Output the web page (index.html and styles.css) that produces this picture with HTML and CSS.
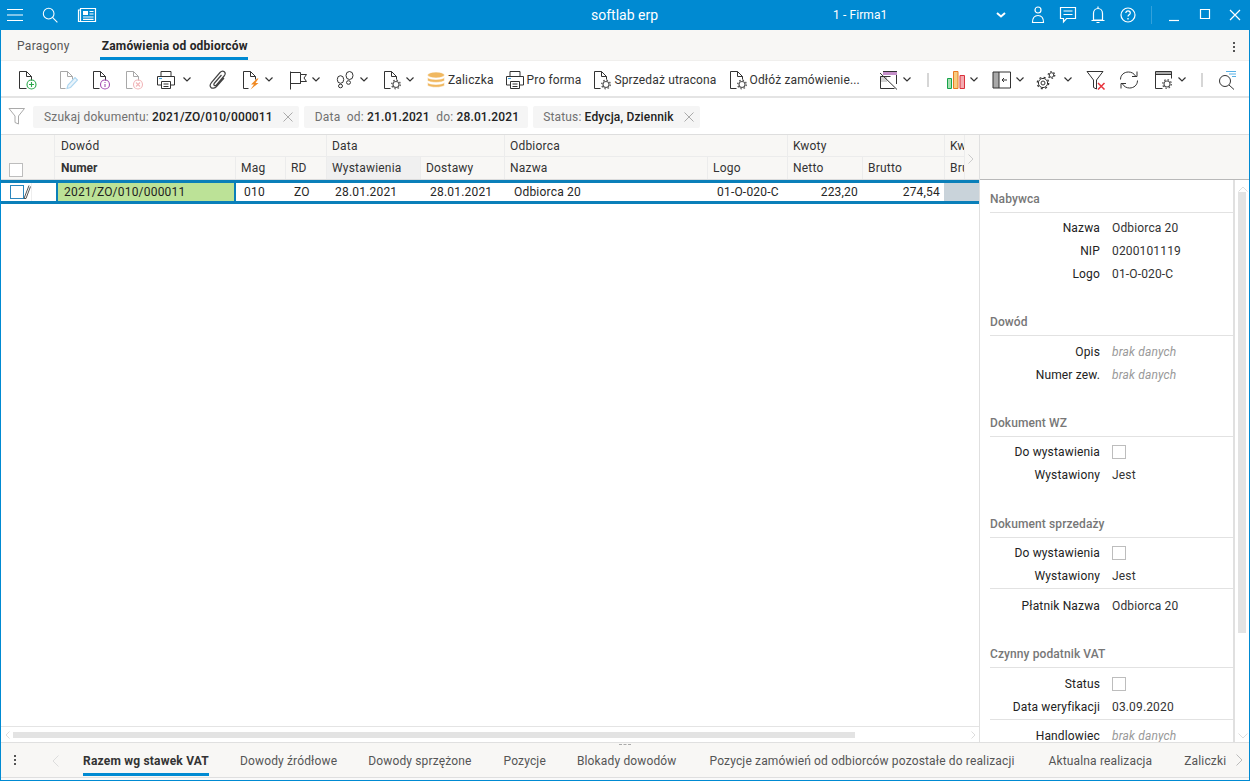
FILE: index.html
```html
<!DOCTYPE html>
<html lang="pl">
<head>
<meta charset="utf-8">
<title>softlab erp</title>
<link rel="stylesheet" href="styles.css">
</head>
<body>
<div class="window">
  <header class="titlebar">
    <div class="tb-left">
      <svg class="i22" viewBox="0 0 18 14"><path class="w" d="M0 1.500h16M0 7h16M0 12.500h16"/></svg>
      <svg class="i18 tb-search" viewBox="0 0 18 18"><circle class="w" cx="7.500" cy="7.500" r="6"/><path class="w" d="M11.800 11.800l5.500 5.500"/></svg>
      <svg class="i20 tb-news" viewBox="0 0 20 16"><path class="w" d="M3.500 1.500h15v13h-15zM3.500 3H1.500v11.500h2"/><path class="wf" d="M6 4h5v4H6z"/><path class="w" d="M12.500 4.500h4M12.500 7h4M6 10h10.500M6 12.300h10.500"/></svg>
    </div>
    <div class="tb-title">softlab erp</div>
    <div class="tb-firma">1 - Firma1</div>
    <svg class="tb-drop" viewBox="0 0 10 6"><path d="M1 1l4 3.500 4-3.500"/></svg>
    <svg class="i20 tb-user" viewBox="0 0 20 20"><circle class="w" cx="10" cy="5" r="3"/><path class="w" d="M4.500 17.500c0-5 2-7 5.500-7s5.500 2 5.500 7z"/></svg>
    <svg class="i20 tb-chat" viewBox="0 0 20 20"><path class="w" d="M2.500 2.500h15v11h-9l-3 3.500v-3.500h-3z"/><path class="w" d="M5.500 6h9M5.500 9.500h9"/></svg>
    <svg class="i20 tb-bell" viewBox="0 0 20 20"><path class="w" d="M5.500 15V8.500c0-3 2-5 4.500-5s4.500 2 4.500 5V15zM3.500 15.500h13M8.500 17.500h3M10 1.500v2"/></svg>
    <svg class="i20 tb-help" viewBox="0 0 20 20"><circle class="w" cx="10" cy="10" r="7"/><path class="w" d="M7.800 8c0-1.500 1-2.200 2.200-2.200s2.300.8 2.300 2.100c0 1.800-2.300 1.800-2.300 3.600"/><path class="wf" d="M9.300 13h1.400v1.400H9.300z"/></svg>
    <div class="tb-sep"></div>
    <svg class="i20 tb-min" viewBox="0 0 20 20"><path class="w" d="M5 15.500h10"/></svg>
    <svg class="i20 tb-max" viewBox="0 0 20 20"><path class="w" d="M5.500 5.500h9v9h-9z"/></svg>
    <svg class="i20 tb-close" viewBox="0 0 20 20"><path class="w" d="M5 5l10 10M15 5L5 15"/></svg>
  </header>

  <nav class="tabs">
    <span class="tab">Paragony</span>
    <span class="tab active">Zamówienia od odbiorców</span>
    <span class="kebab"><i></i><i></i><i></i></span>
  </nav>

  <div class="toolbar">
    <svg class="ic" viewBox="0 0 20 20"><path class="k" d="M1.500 18.500v-17h7l5 5v4M8.500 1.500v5h5M1.500 18.500h7"/><circle class="grn" cx="13.500" cy="14.500" r="4.500"/><path class="grn" d="M13.500 12v5M11 14.500h5"/></svg>
    <svg class="ic m20 faded" viewBox="0 0 20 20"><path class="k" d="M2.500 18.500v-17h7l5 5v3M9.500 1.500v5h5M2.500 18.500h5"/><path class="blu" d="M9 18.500l1-3.500 7-7.500 2.500 2.500-7 7.500z"/></svg>
    <svg class="ic m13" viewBox="0 0 20 20"><path class="k" d="M2.500 18.500v-17h7l5 5v4M9.500 1.500v5h5M2.500 18.500h6"/><circle class="pur" cx="14" cy="14.500" r="4.500"/><path class="pur" d="M14 14v3M14 12v1"/></svg>
    <svg class="ic m13 faded" viewBox="0 0 20 20"><path class="k" d="M2.500 18.500v-17h7l5 5v4M9.500 1.500v5h5M2.500 18.500h6"/><circle class="red" cx="14" cy="14.500" r="4.500"/><path class="red" d="M12 12.500l4 4M16 12.500l-4 4"/></svg>
    <svg class="ic m12" viewBox="0 0 20 20"><path class="k" d="M5 6V1.500h10V6M1.500 15V6.500h17V15H15M5 15H1.500"/><path class="k" d="M5.500 11.500h9v7h-9zM7.500 14h5M7.500 16.500h5"/><path class="blu" d="M3 8.500h3"/></svg>
    <svg class="chev g7" viewBox="0 0 8 5"><path d="M.5.500L4 4 7.500.500"/></svg>
    <svg class="ic m17" viewBox="0 0 20 20"><path class="k2" d="M16 8l-7.500 8.500c-1.700 1.900-4.300 2.100-5.500 1-1.200-1.200-1-3.300.6-5.200L12 2.500c1.300-1.400 3.200-1.700 4.300-.7 1.100 1 1 2.800-.2 4.200L8.500 14.800c-.8.900-1.700 1-2.300.5-.5-.6-.4-1.500.3-2.300L13.500 5"/></svg>
    <svg class="ic m13" viewBox="0 0 20 20"><path class="k" d="M2.500 18.500v-17h7l5 5v3M9.500 1.500v5h5M2.500 18.500h5"/><path class="ofill" d="M16 8.500l-6 6h3L9.500 19.500l8-6.500h-3l3-4.500z"/></svg>
    <svg class="chev" viewBox="0 0 8 5"><path d="M.5.500L4 4 7.500.500"/></svg>
    <svg class="ic m15" viewBox="0 0 20 20"><path class="k" d="M2.500 19.500V1.500M2.500 2.500h10v2h6l-2.500 3.500 2.500 3.500h-6v2h-10M12.500 4.500v9"/></svg>
    <svg class="chev" viewBox="0 0 8 5"><path d="M.5.500L4 4 7.500.500"/></svg>
    <svg class="ic m16" viewBox="0 0 20 20"><ellipse class="k" cx="4.500" cy="9.500" rx="3.200" ry="3.800"/><ellipse class="k" cx="4.500" cy="16" rx="2" ry="1.800"/><ellipse class="k" cx="13.500" cy="5.500" rx="3.500" ry="4"/><ellipse class="k" cx="12.500" cy="12.500" rx="2" ry="1.800"/></svg>
    <svg class="chev" viewBox="0 0 8 5"><path d="M.5.500L4 4 7.500.500"/></svg>
    <svg class="ic m14" viewBox="0 0 20 20"><path class="k" d="M2.500 18.500v-17h7l5 5v3M9.500 1.500v5h5M2.500 18.500h6"/><circle class="gr" cx="14" cy="14.500" r="3"/><circle class="teeth" cx="14" cy="14.500" r="4.300"/></svg>
    <svg class="chev" viewBox="0 0 8 5"><path d="M.5.500L4 4 7.500.500"/></svg>
    <span class="tool m12"><svg class="ic" viewBox="0 0 20 20"><ellipse class="coin" cx="10" cy="5" rx="8.500" ry="3"/><path class="coin" d="M1.500 7.500c2 2.500 15 2.500 17 0v3c-2 2.500-15 2.500-17 0zM1.500 12.500c2 2.500 15 2.500 17 0v2.800c-2 2.700-15 2.700-17 0z"/></svg><span>Zaliczka</span></span>
    <span class="tool m11"><svg class="ic" viewBox="0 0 20 20"><path class="k" d="M5 6V1.500h10V6M1.500 15V6.500h17V15H15M5 15H1.500"/><path class="k" d="M5.500 11.500h9v7h-9zM7.500 14h5M7.500 16.500h5"/><path class="blu" d="M3 8.500h3"/></svg><span>Pro forma</span></span>
    <span class="tool m11"><svg class="ic" viewBox="0 0 20 20"><path class="k" d="M2.500 18.500v-17h7l5 5v3M9.500 1.500v5h5M2.500 18.500h6"/><circle class="gr" cx="14" cy="14.500" r="3"/><circle class="teeth" cx="14" cy="14.500" r="4.300"/></svg><span>Sprzedaż utracona</span></span>
    <span class="tool m11"><svg class="ic" viewBox="0 0 20 20"><path class="k" d="M2.500 18.500v-17h7l5 5v3M9.500 1.500v5h5M2.500 18.500h6"/><circle class="gr" cx="14" cy="14.500" r="3"/><circle class="teeth" cx="14" cy="14.500" r="4.300"/></svg><span>Odłóż zamówienie...</span></span>
    <svg class="ic m19" viewBox="0 0 20 20"><path class="fp" d="M4 1h14v4H4z"/><path class="gfill2" d="M1 6h7v6H1z"/><path class="k" d="M1.500 6.500v12h14M17.500 5v9M4 1.500h14M1.500 6.500h10M1 3l17 16.500"/></svg>
    <svg class="chev" viewBox="0 0 8 5"><path d="M.5.500L4 4 7.500.500"/></svg>
    <div class="vsep"></div>
    <svg class="ic m17" viewBox="0 0 20 20"><path class="bar1" d="M1.500 8.500h4v10h-4z"/><path class="bar2" d="M7.500 1.500h4.500v17H7.500z"/><path class="bar3" d="M14 5.500h4.500v13H14z"/></svg>
    <svg class="chev" viewBox="0 0 8 5"><path d="M.5.500L4 4 7.500.500"/></svg>
    <svg class="ic m14" viewBox="0 0 20 20"><path class="gfill" d="M1 2h6v16H1z"/><path class="k" d="M1 2h17.500v16H1zM7 2v16M15 10H10M12 8l-2 2 2 2"/></svg>
    <svg class="chev" viewBox="0 0 8 5"><path d="M.5.500L4 4 7.500.500"/></svg>
    <svg class="ic m12" viewBox="0 0 20 20"><circle class="k" cx="7" cy="13" r="2"/><circle class="k" cx="7" cy="13" r="4.600"/><circle class="teeth-l" cx="7" cy="13" r="5.700"/><circle class="k" cx="15.500" cy="5" r="2.300"/><circle class="teeth-s" cx="15.500" cy="5" r="3.300"/></svg>
    <svg class="chev g8" viewBox="0 0 8 5"><path d="M.5.500L4 4 7.500.500"/></svg>
    <svg class="ic m14" viewBox="0 0 20 20"><path class="k" d="M1 1.500h16l-6.500 8.500v9l-3-1.500V10z"/><path class="rx" d="M12 13l6.500 6.500M18.500 13L12 19.500"/></svg>
    <svg class="ic m13" viewBox="0 0 20 20"><path class="k" d="M1.500 9.500c0-4.500 3.500-7.500 8-7.500 3 0 5.500 1.500 7 4M18 1.500V6.500h-5M18.500 10.500c0 4.500-3.500 7.500-8 7.500-3 0-5.500-1.500-7-4M2 18.500V13.500h5"/></svg>
    <svg class="ic m15" viewBox="0 0 20 20"><path class="gfill" d="M1.500 1.500h16v3h-16z"/><path class="k" d="M1.500 1.500h16v7M1.500 1.500v17h7M1.500 4.500h16"/><circle class="gr" cx="13" cy="14" r="3"/><circle class="teeth" cx="13" cy="14" r="4.300"/></svg>
    <svg class="chev" viewBox="0 0 8 5"><path d="M.5.500L4 4 7.500.500"/></svg>
    <div class="vsep sep2"></div>
    <svg class="ic m14" viewBox="0 0 20 20"><circle class="k" cx="8" cy="11" r="5.500"/><path class="k" d="M12 15l5 4.500"/><path class="bl" d="M9 1.500h10M12 4h7M15 6.500h4"/></svg>
  </div>

  <div class="filters">
    <svg class="funnel" viewBox="0 0 18 18"><path d="M1 1.500h15.500l-6 7.500v8l-3.500-1.500V9z"/></svg>
    <span class="chip"><span class="ct"><span class="cl">Szukaj dokumentu: </span><b>2021/ZO/010/000011</b></span><svg class="x" viewBox="0 0 10 10"><path d="M.5.500l9 9M9.500.500l-9 9"/></svg></span>
    <span class="chip c2"><span class="ct"><span class="cl">Data  od: </span><b>21.01.2021</b><span class="cl">  do: </span><b>28.01.2021</b></span></span>
    <span class="chip c3"><span class="ct"><span class="cl">Status: </span><b>Edycja, Dziennik</b></span><svg class="x" viewBox="0 0 10 10"><path d="M.5.500l9 9M9.500.500l-9 9"/></svg></span>
  </div>

  <main class="content">
    <section class="gridwrap">
      <div class="ghead">
        <div class="gh-corner"><span class="cb"></span></div>
        <div class="gh-g g-dowod">Dowód</div>
        <div class="gh-g g-data">Data</div>
        <div class="gh-g g-odb">Odbiorca</div>
        <div class="gh-g g-kwoty">Kwoty</div>
        <div class="gh-g g-kw">Kw</div>
        <div class="gh-c strong">Numer</div>
        <div class="gh-c">Mag</div>
        <div class="gh-c">RD</div>
        <div class="gh-c sorted">Wystawienia</div>
        <div class="gh-c">Dostawy</div>
        <div class="gh-c">Nazwa</div>
        <div class="gh-c">Logo</div>
        <div class="gh-c">Netto</div>
        <div class="gh-c">Brutto</div>
        <div class="gh-c">Bru</div>
        <div class="hmask"><svg viewBox="0 0 6 10"><path d="M.5.500L5 5 .5 9.500"/></svg></div>
      </div>
      <div class="grow">
        <div class="c c0"><span class="rowcb"></span><svg class="pen" viewBox="0 0 8 14"><path d="M1 13.500L6 .500M3 13.500L7.500 1.500M1 13.500h2"/></svg><span class="cellsep"></span></div>
        <div class="c c-num">2021/ZO/010/000011</div>
        <div class="c c-mag">010</div>
        <div class="c c-rd">ZO</div>
        <div class="c c-d1">28.01.2021</div>
        <div class="c c-d2">28.01.2021</div>
        <div class="c c-naz">Odbiorca 20</div>
        <div class="c c-logo">01-O-020-C</div>
        <div class="c c-r c-net">223,20</div>
        <div class="c c-r c-bru">274,54</div>
        <div class="c c-gray"></div>
      </div>
      <div class="gspace"></div>
      <div class="hscroll">
        <svg class="arr" viewBox="0 0 5 8"><path d="M4.500.500L1 4l3.500 3.500"/></svg>
        <div class="hthumb"></div>
        <svg class="arr arr-r" viewBox="0 0 5 8"><path d="M.5.500L4 4 .5 7.500"/></svg>
      </div>
    </section>

    <aside class="side">
      <div class="side-head"></div>
      <div class="side-body">
        <div class="side-scroll">
          <h3 class="st st-first">Nabywca</h3>
          <div class="rows">
            <div class="rw"><span class="l">Nazwa</span><span class="v">Odbiorca 20</span></div>
            <div class="rw"><span class="l">NIP</span><span class="v">0200101119</span></div>
            <div class="rw"><span class="l">Logo</span><span class="v">01-O-020-C</span></div>
          </div>
          <h3 class="st st-b">Dowód</h3>
          <div class="rows roomy">
            <div class="rw"><span class="l">Opis</span><span class="v none">brak danych</span></div>
            <div class="rw"><span class="l">Numer zew.</span><span class="v none">brak danych</span></div>
          </div>
          <h3 class="st st-b">Dokument WZ</h3>
          <div class="rows">
            <div class="rw"><span class="l">Do wystawienia</span><span class="v"><span class="cb"></span></span></div>
            <div class="rw"><span class="l">Wystawiony</span><span class="v">Jest</span></div>
          </div>
          <h3 class="st st-c">Dokument sprzedaży</h3>
          <div class="rows">
            <div class="rw"><span class="l">Do wystawienia</span><span class="v"><span class="cb"></span></span></div>
            <div class="rw"><span class="l">Wystawiony</span><span class="v">Jest</span></div>
          </div>
          <div class="rows ruled">
            <div class="rw"><span class="l">Płatnik Nazwa</span><span class="v">Odbiorca 20</span></div>
          </div>
          <h3 class="st st-b">Czynny podatnik VAT</h3>
          <div class="rows roomy">
            <div class="rw"><span class="l">Status</span><span class="v"><span class="cb"></span></span></div>
            <div class="rw"><span class="l">Data weryfikacji</span><span class="v">03.09.2020</span></div>
          </div>
          <div class="rows ruled r2">
            <div class="rw"><span class="l">Handlowiec</span><span class="v none">brak danych</span></div>
          </div>
        </div>
        <div class="vscroll">
          <svg class="va" viewBox="0 0 10 6"><path d="M.5 5.500L5 1l4.500 4.500"/></svg>
          <div class="vthumb"></div>
          <svg class="va va-d" viewBox="0 0 10 6"><path d="M.5.500L5 5 9.500.500"/></svg>
        </div>
      </div>
    </aside>
  </main>

  <footer class="bottom">
    <div class="grip"></div>
    <span class="kebab bk"><i></i><i></i><i></i></span>
    <svg class="barr" viewBox="0 0 7 12"><path d="M6.500.500L1 6l5.500 5.500"/></svg>
    <div class="btabs">
      <span class="btab active">Razem wg stawek VAT</span>
      <span class="btab">Dowody źródłowe</span>
      <span class="btab">Dowody sprzężone</span>
      <span class="btab bm1">Pozycje</span>
      <span class="btab">Blokady dowodów</span>
      <span class="btab bm2">Pozycje zamówień od odbiorców pozostałe do realizacji</span>
      <span class="btab bm3">Aktualna realizacja</span>
      <span class="btab bm1">Zaliczki</span>
    </div>
    <svg class="barr barr-r" viewBox="0 0 7 12"><path d="M.5.500L6 6 .5 11.500"/></svg>
  </footer>
</div>
</body>
</html>
```

FILE: styles.css
```css
* { box-sizing: border-box; }
html, body { margin: 0; padding: 0; height: 100%; overflow: hidden; }
body { font-family: Roboto, "Liberation Sans", sans-serif; font-size: 12px; color: #262626; background: #fff; }
svg { display: block; flex: none; fill: none; }

.window { width: 1250px; height: 781px; display: flex; flex-direction: column; border: solid #008ad2; border-width: 0 1px 1px 1px; overflow: hidden; }

/* title bar */
.titlebar { height: 30px; margin: 0 -1px; background: #008ad2; display: flex; align-items: center; color: #fff; flex: none; padding-left: 7px; }
.w { stroke: #fff; stroke-width: 1.2; fill: none; }
.wf { fill: #fff; }
.tb-left { display: flex; align-items: center; width: 495px; }
.i22 { width: 18px; height: 14px; }
.i18 { width: 16px; height: 16px; }
.i20 { width: 20px; height: 20px; }
.tb-search { margin-left: 17px; }
.tb-news { height: 16px; margin-left: 19px; }
.tb-title { width: 246px; text-align: center; font-size: 14px; padding-right: 1px; }
.tb-firma { width: 248px; padding-left: 85px; font-size: 12px; letter-spacing: .1px; white-space: nowrap; }
.tb-drop { width: 10px; height: 6px; }
.tb-drop path { stroke: #fff; stroke-width: 2; }
.tb-user { margin-left: 22px; }
.tb-chat { margin-left: 10px; }
.tb-bell { margin-left: 10px; }
.tb-help { margin-left: 10px; }
.tb-sep { width: 1px; height: 18px; background: #33a1db; margin-left: 13px; }
.tb-min { margin-left: 12px; }
.tb-max { margin-left: 11px; margin-top: -2px; }
.tb-close { margin-left: 10px; }

/* top tabs */
.tabs { height: 31px; background: #f8f7f5; border-bottom: 1px solid #f0efed; display: flex; align-items: flex-start; padding-left: 16px; flex: none; position: relative; }
.tab { height: 30px; line-height: 32px; color: #555; font-size: 12px; letter-spacing: .3px; }
.tab.active { margin-left: 30px; padding: 0 0 0 2px; color: #262626; font-weight: 700; border-bottom: 3px solid #008ad2; letter-spacing: .2px; }
.kebab { position: absolute; right: 14px; top: 12px; display: flex; flex-direction: column; gap: 2px; }
.kebab i { display: block; width: 2px; height: 2px; background: #555; }

/* toolbar */
.toolbar { height: 37px; flex: none; background: #fff; border-bottom: 2px solid #e4e4e4; display: flex; align-items: center; padding: 2px 0 0 17px; font-size: 12px; color: #333; }
.ic { width: 20px; height: 20px; }
.tool { display: flex; align-items: center; gap: 2px; white-space: nowrap; letter-spacing: .15px; }
.chev { width: 8px; height: 5px; margin-left: 4px; }
.chev path { stroke: #333; stroke-width: 1.2; }
.chev.g7 { margin-left: 7px; }
.chev.g8 { margin-left: 8px; }
.m11 { margin-left: 11px; } .m12 { margin-left: 12px; } .m13 { margin-left: 13px; } .m14 { margin-left: 14px; }
.m15 { margin-left: 15px; } .m16 { margin-left: 16px; } .m17 { margin-left: 17px; } .m19 { margin-left: 19px; } .m20 { margin-left: 20px; }
.k { stroke: #333; stroke-width: 1; fill: none; }
.k2 { stroke: #444; stroke-width: 1.2; fill: none; }
.grn { stroke: #2aa84a; stroke-width: 1.1; fill: none; }
.blu { stroke: #3e9fdc; stroke-width: 1.1; fill: #cfe6f6; }
.pur { stroke: #a54fb3; stroke-width: 1.1; fill: none; }
.red { stroke: #e0525a; stroke-width: 1.1; fill: none; }
.gr { stroke: #555; stroke-width: 1.1; fill: #fff; }
.teeth { stroke: #555; stroke-width: 1.3; stroke-dasharray: 1.500 1.880; }
.teeth-l { stroke: #333; stroke-width: 1.3; stroke-dasharray: 2 2.480; }
.teeth-s { stroke: #333; stroke-width: 1.2; stroke-dasharray: 1.500 1.960; }
.ofill { fill: #f08a24; stroke: none; }
.coin { fill: #f0b860; stroke: #fff; stroke-width: .6; }
.faded { opacity: .42; }
.fp { fill: #c48fc9; }
.gfill { fill: #a9a9a9; }
.gfill2 { fill: #d2d2d2; }
.bar1 { fill: #a6dfb1; stroke: #16a34a; }
.bar2 { fill: #f7cc80; stroke: #ea7a20; }
.bar3 { fill: #f4aab0; stroke: #d9323d; }
.rx { stroke: #e8333c; stroke-width: 1.500; }
.bl { stroke: #58b1e6; stroke-width: 1.200; }
.vsep { width: 2px; height: 14px; background: #d6d6d6; margin-left: 16px; }
.sep2 { margin-left: 15px; }

/* filters */
.filters { height: 36px; flex: none; background: #fff; display: flex; align-items: center; padding-left: 7px; gap: 5px; }
.funnel { width: 18px; height: 18px; margin-right: 2px; }
.funnel path { stroke: #aaa; stroke-width: 1; }
.chip { height: 22px; background: #f5f5f5; border-radius: 2px; display: flex; align-items: center; padding: 0 6px 0 11px; color: #222; letter-spacing: .2px; margin-top: 1px; }
.ct { white-space: pre; }
.chip b { font-weight: 500; letter-spacing: .15px; }
.chip.c2 { padding-right: 9px; }
.chip.c3 { padding-left: 10px; letter-spacing: .15px; }
.cl { color: #707070; }
.x { width: 10px; height: 10px; margin-left: 10px; }
.x path { stroke: #aaa; stroke-width: 1; }

/* content */
.content { flex: 1; min-height: 0; display: flex; border-top: 1px solid #dedede; }
.gridwrap { width: 978px; flex: none; display: flex; flex-direction: column; }
.ghead { display: grid; grid-template-columns: 54px 180px 50px 41px 94px 84px 203px 80px 75px 82px 35px; grid-template-rows: 22px 22px; height: 45px; background: #f8f7f5; position: relative; overflow: hidden; border-bottom: 1px solid #dcdcdc; }
.gh-corner { grid-row: 1 / 3; grid-column: 1; position: relative; border-right: 1px solid #ececec; }
.gh-corner .cb { position: absolute; left: 8px; top: 28px; }
.cb { display: inline-block; width: 14px; height: 14px; border: 1px solid #bdbdbd; background: #fff; }
.gh-g { padding-left: 5px; line-height: 22px; color: #333; border-left: 1px solid #ececec; border-bottom: 1px solid #ececec; letter-spacing: .2px; overflow: hidden; }
.g-dowod { grid-column: 2 / 5; border-left: 0; padding-left: 6px; }
.g-data { grid-column: 5 / 7; }
.g-odb { grid-column: 7 / 9; }
.g-kwoty { grid-column: 9 / 11; }
.g-kw { grid-column: 11; }
.gh-c { padding-left: 5px; line-height: 22px; color: #333; border-left: 1px solid #ececec; letter-spacing: .2px; overflow: hidden; white-space: nowrap; }
.gh-c.strong { font-weight: 700; border-left: 0; letter-spacing: 0; padding-left: 6px; }
.gh-c.sorted { background: #f0f0f0; }
.hmask { position: absolute; right: 0; top: 0; bottom: 0; width: 15px; background: #f8f7f5; border-left: 1px solid #ececec; padding: 19px 0 0 3px; }
.hmask svg { width: 6px; height: 10px; }
.hmask path { stroke: #ccc; }
.grow { height: 24px; display: grid; grid-template-columns: 55px 180px 49px 41px 94px 84px 203px 80px 75px 82px 35px; border-top: 3px solid #0a7fb9; border-bottom: 3px solid #0a7fb9; line-height: 18px; letter-spacing: .2px; flex: none; }
.c { white-space: nowrap; overflow: hidden; }
.c0 { display: flex; padding-left: 9px; align-items: center; }
.rowcb { width: 14px; height: 14px; border: 1px solid #2b86bd; }
.pen { width: 8px; height: 14px; margin-left: -1px; }
.pen path { stroke: #555; stroke-width: 1; }
.cellsep { width: 1px; height: 18px; background: #eee; margin-left: 0; }
.c-num { background: #bce297; border: solid #0a7fb9; border-width: 0 2px; padding-left: 6px; color: #1f1f1f; }
.c-mag { padding-left: 8px; }
.c-rd { padding-left: 9px; }
.c-d1 { padding-left: 9px; }
.c-d2 { padding-left: 10px; }
.c-naz { padding-left: 10px; }
.c-logo { padding-left: 10px; }
.c-r { text-align: right; padding-right: 4px; }
.c-gray { background: #c9d3da; }
.gspace { flex: 1; }
.hscroll { height: 16px; border-top: 1px solid #e4e4e4; display: flex; align-items: center; padding-left: 4px; flex: none; }
.arr { width: 5px; height: 8px; }
.arr path { stroke: #ddd; }
.hthumb { width: 842px; height: 6px; background: #e3e3e3; margin-left: 3px; }
.arr-r { margin-left: 116px; }

/* side */
.side { flex: 1; min-width: 0; display: flex; flex-direction: column; border-left: 1px solid #e0e0e0; }
.side-head { height: 45px; background: #f8f7f5; border-bottom: 1px solid #b9b9b9; flex: none; }
.side-body { flex: 1; min-height: 0; display: flex; }
.side-scroll { width: 253px; flex: none; overflow: hidden; padding-left: 10px; }
.st { margin: 23px 0 0; height: 26px; line-height: 25px; font-size: 12px; font-weight: 500; color: #777; border-bottom: 1px solid #e2e2e2; letter-spacing: .1px; }
.st-first { margin-top: 7px; }
.st-b { margin-top: 25px; }
.st-c { margin-top: 26px; }
.rows { padding-top: 3px; }
.roomy { padding-top: 4px; }
.ruled { border-top: 1px solid #e2e2e2; margin-top: 1px; padding-top: 5px; }
.r2 { padding-top: 4px; }
.rw { display: flex; height: 23px; align-items: center; letter-spacing: .15px; }
.l { width: 110px; text-align: right; flex: none; color: #222; white-space: nowrap; }
.v { margin-left: 12px; color: #333; white-space: nowrap; display: flex; }
.none { color: #999; font-style: italic; font-size: 12px; }
.vscroll { flex: 1; border-left: 2px solid #e0e0e0; position: relative; }
.va { position: absolute; left: 3px; top: 6px; width: 10px; height: 6px; }
.va path { stroke: #ddd; }
.va-d { top: auto; bottom: 3px; }
.vthumb { position: absolute; left: 3px; top: 12px; width: 8px; height: 441px; background: #e3e3e3; }

/* bottom tabs */
.bottom { height: 38px; flex: none; background: #f8f7f5; border-top: 1px solid #e0e0e0; box-shadow: inset 0 -2px 0 #fafafa, inset 0 -3px 0 #dfdfdf; display: flex; position: relative; overflow: hidden; }
.grip { position: absolute; left: 618px; top: 1px; width: 12px; height: 1px; border-top: 1px dashed #aaa; }
.bk { position: static; margin: 12px 0 0 13px; }
.barr { width: 7px; height: 12px; margin: 12px 0 0 36px; }
.barr path { stroke: #ddd; }
.btabs { display: flex; gap: 31px; margin-left: 24px; width: 1145px; height: 33px; overflow: hidden; flex: none; white-space: nowrap; letter-spacing: .15px; color: #555; }
.btab { height: 33px; line-height: 36px; flex: none; }
.btab.active { font-weight: 700; color: #333; border-bottom: 3px solid #008ad2; letter-spacing: .2px; }
.bm1 { margin-left: 1px; }
.bm2 { margin-left: 2px; }
.bm3 { margin-left: 3px; }
.barr-r { position: absolute; right: 6px; top: 11px; margin: 0; background: #f8f7f5; }
.barr-r path { stroke: #bbb; }
```
